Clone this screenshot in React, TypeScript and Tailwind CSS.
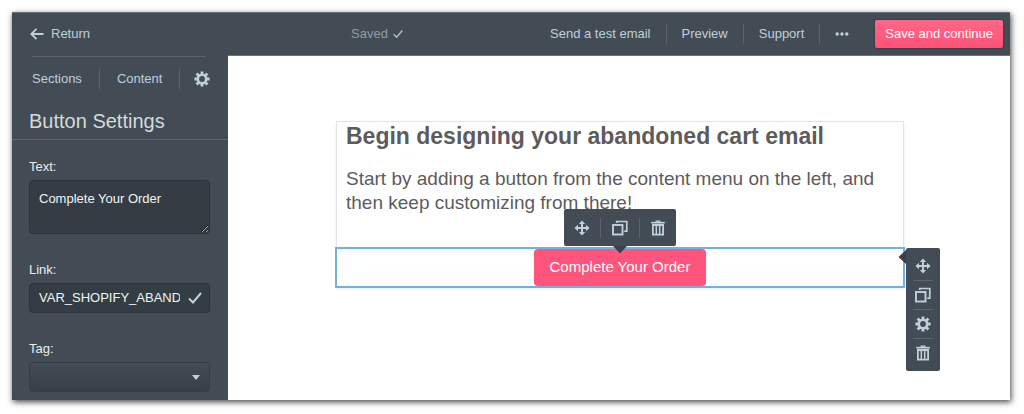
import React, { useState } from 'react';

function MoveIcon() {
  return (
    <svg viewBox="0 0 16 16" className="w-4 h-4" fill="currentColor" aria-hidden="true">
      <path d="M7 4H4.800L8 .4 11.200 4H9v3h3V4.800L15.600 8 12 11.200V9H9v3h2.200L8 15.600 4.800 12H7V9H4v2.200L.4 8 4 4.800V7h3z" />
    </svg>
  );
}

function CopyIcon() {
  return (
    <svg viewBox="0 0 16 16" className="w-4 h-4" fill="none" stroke="currentColor" aria-hidden="true">
      <rect x="1" y="5" width="9.500" height="9.500" strokeWidth="1.900" />
      <path d="M4.700 3V1.500h10.100v9.700h-2.500" strokeWidth="1.700" />
    </svg>
  );
}

function GearIcon() {
  return (
    <svg viewBox="0 0 16 16" className="w-4 h-4" stroke="currentColor" fill="none" aria-hidden="true">
      <circle cx="8" cy="8" r="4.200" strokeWidth="2.600" />
      <path
        strokeWidth="2.800"
        d="M8 .4v2.800M8 12.800v2.800M.4 8h2.800M12.800 8h2.800M2.600 2.600l2 2M11.400 11.400l2 2M2.600 13.400l2-2M11.400 4.600l2-2"
      />
    </svg>
  );
}

function TrashIcon() {
  return (
    <svg viewBox="0 0 16 16" className="w-4 h-4" fill="none" stroke="currentColor" aria-hidden="true">
      <path d="M1.200 2.700h13.600" strokeWidth="1.700" />
      <path d="M5.500 1.200h5" strokeWidth="1.400" />
      <path d="M2.900 5v9.600h10.200V5z" strokeWidth="1.800" />
      <path d="M6.300 5.500v8.500M9.700 5.500v8.500" strokeWidth="1.500" />
    </svg>
  );
}

function CheckIcon({ className }: { className: string }) {
  return (
    <svg viewBox="0 0 14 12" className={className} fill="none" stroke="currentColor" strokeWidth="2" aria-hidden="true">
      <path d="M1 6.500l4 4L13 1" />
    </svg>
  );
}

const labelClass = 'block text-[13px] leading-5 text-[#e9edef]';

export default function App() {
  const [text, setText] = useState('Complete Your Order');
  const [link, setLink] = useState('VAR_SHOPIFY_ABANDONED');

  return (
    <div className="bg-white pt-3 pl-3 pr-3.5 pb-3.5 font-['Liberation_Sans',Arial,sans-serif] text-[13px]">
      <div className="bg-white shadow-[1px_2px_6px_rgba(0,0,0,0.75)]">
        {/* Top bar */}
        <header className="flex items-center h-[43px] bg-[#434c54] border-t border-[#6b737a] text-[#bfcfdb]">
          <div className="w-54 shrink-0 pl-[18px]">
            <a href="#" className="flex items-center gap-[7px]">
              <svg viewBox="0 0 14 12" className="w-3.5 h-3" fill="none" stroke="currentColor" strokeWidth="1.800" aria-hidden="true">
                <path d="M13.500 6H1.500M6.500 .8L1.300 6l5.200 5.200" />
              </svg>
              Return
            </a>
          </div>
          <p className="flex items-center gap-[5px] ml-[123px] text-[#8f9da7]">
            Saved
            <CheckIcon className="w-2.5 h-2.5 text-[#b0bec8]" />
          </p>
          <nav className="flex items-center ml-auto leading-5">
            <a href="#" className="px-[15px]">Send a test email</a>
            <a href="#" className="px-[15px] border-l border-[#5b656e]">Preview</a>
            <a href="#" className="px-[15px] border-l border-[#5b656e]">Support</a>
            <button type="button" aria-label="More" className="h-5 pl-[15px] border-l border-[#5b656e]">
              <svg viewBox="0 0 14 4" className="w-3.5 h-1" fill="currentColor" aria-hidden="true">
                <circle cx="2.200" cy="2" r="1.700" />
                <circle cx="7" cy="2" r="1.700" />
                <circle cx="11.800" cy="2" r="1.700" />
              </svg>
            </button>
          </nav>
          <button
            type="button"
            className="h-7 ml-[26px] mr-[7px] px-[10px] rounded-xs bg-linear-to-b from-[#ff6688] to-[#fc5279] text-white shadow-[0_0_1px_1px_#39424a]"
          >
            Save and continue
          </button>
        </header>

        <div className="flex">
          {/* Settings sidebar */}
          <aside className="w-54 shrink-0 pt-px bg-[#434c54]">
            <nav className="flex items-center h-[45px] ml-5 mr-[22px] border-t border-[#5b656e] leading-5 text-[#bfcfdb]">
              <a href="#" className="pr-[17px]">Sections</a>
              <a href="#" className="px-[17px] border-x border-[#5b656e]">Content</a>
              <button type="button" aria-label="Settings" className="ml-3.5 -mr-1">
                <GearIcon />
              </button>
            </nav>
            <h1 className="h-[39px] pl-[17px] border-b border-[#5b656e] text-xl leading-10 text-[#d3dade]">Button Settings</h1>
            <form className="flex flex-col gap-[26px] pt-[17px] pb-2 pl-[17px] pr-[18px]">
              <div>
                <label htmlFor="text" className={labelClass}>Text:</label>
                <textarea
                  id="text"
                  value={text}
                  onChange={(e) => setText(e.target.value)}
                  className="block w-full h-[54px] mt-[3px] px-[9px] py-2 rounded-sm border border-[#2b343a] bg-[#343d43] leading-5 text-[#f1f4f5] resize-y"
                />
              </div>
              <div>
                <label htmlFor="link" className={labelClass}>Link:</label>
                <div className="flex items-center h-[30px] mt-[3px] pl-[9px] pr-[7px] rounded-sm border border-[#2b343a] bg-[#343d43]">
                  <input
                    id="link"
                    type="text"
                    value={link}
                    onChange={(e) => setLink(e.target.value)}
                    className="flex-1 min-w-0 mr-2 bg-transparent text-[#f1f4f5] outline-none"
                  />
                  <CheckIcon className="w-3.5 h-3 text-[#bfcfdb]" />
                </div>
              </div>
              <div>
                <label htmlFor="tag" className={labelClass}>Tag:</label>
                <div className="grid items-center mt-[3px]">
                  <select
                    id="tag"
                    className="col-start-1 row-start-1 appearance-none w-full h-[30px] px-2 rounded-sm border border-[#343c44] bg-linear-to-b from-[#444c56] to-[#383f49] text-white"
                  >
                    <option></option>
                  </select>
                  <svg viewBox="0 0 8 5" className="col-start-1 row-start-1 justify-self-end w-2 h-[5px] mr-2.5 text-[#bfcfdb] pointer-events-none" fill="currentColor" aria-hidden="true">
                    <path d="M0 0h8L4 5z" />
                  </svg>
                </div>
              </div>
            </form>
          </aside>

          {/* Email canvas */}
          <main className="flex-1 min-w-0 pt-[65px] pl-0.5 border-t border-[#6b737a]">
            <div className="max-w-[568px] mx-auto border border-[#e2e4e5] shadow-[0_1px_3px_rgba(0,0,0,0.08)] text-[#5d5b5c]">
              <h2 className="px-[9px] text-[23px] leading-7 font-bold">Begin designing your abandoned cart email</h2>
              <p className="mt-[17px] px-[9px] text-[19px] leading-6">
                Start by adding a button from the content menu on the left, and then keep customizing from there!
              </p>

              {/* Selected row */}
              <div className="relative mt-8 -mx-0.5 -mb-px flex justify-center border-2 border-[#72b1de]">
                <div className="relative">
                  <button type="button" className="block h-[37px] px-4 rounded-sm bg-[#ff547b] text-[15px] text-white">
                    Complete Your Order
                  </button>
                  <div className="absolute bottom-full left-1/2 -translate-x-1/2 flex items-center h-[37px] mb-[3px] rounded-xs bg-[#434c54] text-[#bfcfdb]">
                    <button type="button" aria-label="Move" className="px-2.5"><MoveIcon /></button>
                    <button type="button" aria-label="Duplicate" className="h-5 px-[11px] border-x border-[#5b656e]"><CopyIcon /></button>
                    <button type="button" aria-label="Delete" className="px-2.5"><TrashIcon /></button>
                    <svg viewBox="0 0 14 8" className="absolute top-full left-1/2 -translate-x-1/2 w-3.5 h-2 text-[#39424a]" fill="currentColor" aria-hidden="true">
                      <path d="M0 0h14L7 7.500z" />
                    </svg>
                  </div>
                </div>
                <div className="absolute -top-px left-full ml-[3px] w-[34px] px-[7px] py-1 rounded-xs bg-[#434c54] text-[#bfcfdb]">
                  <svg viewBox="0 0 8 14" className="absolute top-0.5 right-full w-2 h-3.5 text-[#39424a]" fill="currentColor" aria-hidden="true">
                    <path d="M8 0v14L.5 7z" />
                  </svg>
                  <button type="button" aria-label="Move row" className="flex items-center justify-center w-full h-7"><MoveIcon /></button>
                  <button type="button" aria-label="Duplicate row" className="flex items-center justify-center w-full h-[29px] border-t border-[#5b656e]"><CopyIcon /></button>
                  <button type="button" aria-label="Row settings" className="flex items-center justify-center w-full h-[29px] border-t border-[#5b656e]"><GearIcon /></button>
                  <button type="button" aria-label="Delete row" className="flex items-center justify-center w-full h-[29px] border-t border-[#5b656e]"><TrashIcon /></button>
                </div>
              </div>
            </div>
          </main>
        </div>
      </div>
    </div>
  );
}
